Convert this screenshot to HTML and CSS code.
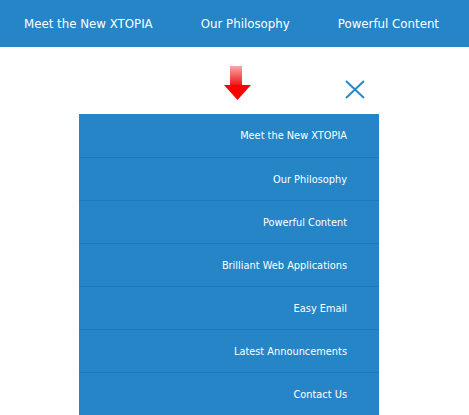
FILE: index.html
```html
<!DOCTYPE html>
<html lang="en">
<head>
    <meta charset="UTF-8">
    <meta name="viewport" content="width=device-width, initial-scale=1.0">
    <title>XTOPIA Menu</title>
    <link rel="stylesheet" href="styles.css">
</head>
<body>
    <!-- Top navigation bar -->
    <nav class="top-nav">
        <a href="#">Meet the New XTOPIA</a>
        <a href="#">Our Philosophy</a>
        <a href="#">Powerful Content</a>
    </nav>

    <div class="menu-wrap">
        <!-- Arrow hint and close button -->
        <div class="menu-tools">
            <svg class="hint-arrow" width="28" height="35" viewBox="0 0 28 35">
                <defs>
                    <linearGradient id="shaft" x1="0" y1="0" x2="0" y2="1">
                        <stop offset="0" stop-color="#f7a8a8"/>
                        <stop offset="1" stop-color="#f01010"/>
                    </linearGradient>
                </defs>
                <rect x="6" y="0" width="12" height="20" fill="url(#shaft)"/>
                <polygon points="0,19 27,19 13.5,34" fill="#f00"/>
            </svg>
            <svg class="close-btn" width="20" height="19" viewBox="0 0 20 19">
                <path d="M1 1 L19 18 M19 1 L1 18" stroke="#2a87c8" stroke-width="2" fill="none"/>
            </svg>
        </div>

        <!-- Dropdown menu -->
        <ul class="side-menu">
            <li><a href="#">Meet the New XTOPIA</a></li>
            <li><a href="#">Our Philosophy</a></li>
            <li><a href="#">Powerful Content</a></li>
            <li><a href="#">Brilliant Web Applications</a></li>
            <li><a href="#">Easy Email</a></li>
            <li><a href="#">Latest Announcements</a></li>
            <li><a href="#">Contact Us</a></li>
        </ul>
    </div>
</body>
</html>
```

FILE: styles.css
```css
/* General page */
body {
    margin: 0;
    background-color: #fff;
    font-family: "DejaVu Sans", Verdana, sans-serif;
}

/* Blue bar across the top */
.top-nav {
    display: flex;
    height: 47px;
    align-items: center;
    gap: 48px;
    padding-left: 24px;
    background-color: #2585c7;
    overflow: hidden;
}

.top-nav a {
    color: #fff;
    font-size: 11.8px;
    text-decoration: none;
    white-space: nowrap;
}

/* Menu block below the bar */
.menu-wrap {
    width: 300px;
    margin-left: 79px;
}

.menu-tools {
    display: flex;
    height: 67px;
    align-items: flex-start;
}

.hint-arrow {
    margin-top: 19px;
    margin-left: 145px;
}

.close-btn {
    margin-top: 33px;
    margin-left: 93px;
}

.side-menu {
    list-style: none;
    margin: 0;
    padding: 0;
    background-color: #2585c7;
}

.side-menu li {
    height: 43px;
    border-top: 1px solid #1f79b9;
    box-sizing: border-box;
}

.side-menu li:first-child {
    border-top: none;
}

.side-menu a {
    display: flex;
    height: 100%;
    align-items: center;
    justify-content: flex-end;
    padding-right: 32px;
    color: #fff;
    font-size: 9.8px;
    text-decoration: none;
}
```
